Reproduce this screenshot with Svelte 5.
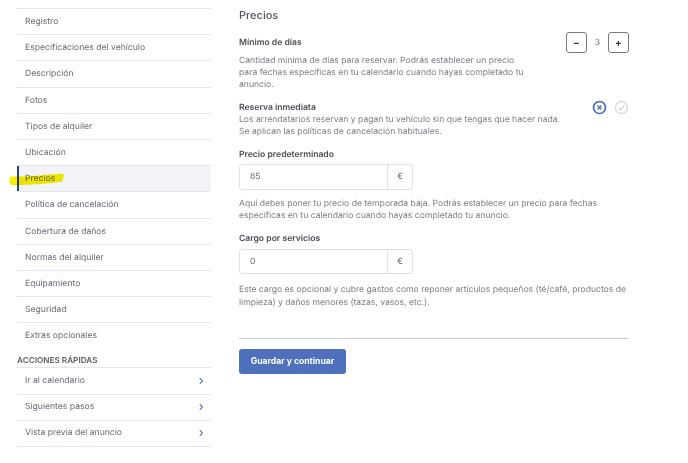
<script>
  const steps = ['Registro','Especificaciones del vehículo','Descripción','Fotos','Tipos de alquiler','Ubicación','Precios','Política de cancelación','Cobertura de daños','Normas del alquiler','Equipamiento','Seguridad','Extras opcionales'];
  const quick = ['Ir al calendario','Siguientes pasos','Vista previa del anuncio'];
</script>

<div class="page">
  <aside class="side">
    <ul class="nav">
      {#each steps as s}
        <li class:active={s === 'Precios'} class:last={s === 'Extras opcionales'}>
          {s}
          {#if s === 'Precios'}
            <svg class="marker" width="56" height="13" viewBox="0 0 56 13"><path d="M1 4 C3 3 14 4 24 3 C36 2 46 1 53 0.5 C55 0.5 55 3 54 6 C54 8 53 9 50 9 C38 11 20 12 3 12 C0 12 0 6 1 4 Z" fill="#f6f000"/></svg>
          {/if}
        </li>
      {/each}
    </ul>
    <h3>ACCIONES RÁPIDAS</h3>
    <ul class="nav quick">
      {#each quick as q}
        <li>
          {q}
          <svg width="6" height="8" viewBox="0 0 6 8"><path d="M1.8 1.2 L4.4 4 L1.8 6.8" fill="none" stroke="#5f7cc2" stroke-width="1.2"/></svg>
        </li>
      {/each}
    </ul>
  </aside>

  <main class="main">
    <h1>Precios</h1>

    <section class="split first">
      <div class="grow">
        <h2>Mínimo de días</h2>
        <p>Cantidad mínima de días para reservar. Podrás establecer un precio<br />para fechas específicas en tu calendario cuando hayas completado tu<br />anuncio.</p>
      </div>
      <div class="stepper">
        <button>−</button>
        <span>3</span>
        <button>+</button>
      </div>
    </section>

    <section class="split second">
      <div class="grow">
        <h2 class="tight">Reserva inmediata</h2>
        <p>Los arrendatarios reservan y pagan tu vehículo sin que tengas que hacer nada.<br />Se aplican las políticas de cancelación habituales.</p>
      </div>
      <div class="toggles">
        <svg width="15" height="15" viewBox="0 0 15 15"><circle cx="7.5" cy="7.5" r="6" fill="none" stroke="#4368b8" stroke-width="1.7"/><path d="M5.5 5.5 L9.5 9.5 M9.5 5.5 L5.5 9.5" stroke="#4368b8" stroke-width="1.3"/></svg>
        <svg width="15" height="15" viewBox="0 0 15 15"><circle cx="7.5" cy="7.5" r="6" fill="none" stroke="#d5dbe4" stroke-width="1.3"/><path d="M4.6 7.8 L6.7 9.8 L10.6 5.4" fill="none" stroke="#c9ced6" stroke-width="1.2"/></svg>
      </div>
    </section>

    <section class="field">
      <h2>Precio predeterminado</h2>
      <div class="input"><span class="val">85</span><span class="unit">€</span></div>
      <p>Aquí debes poner tu precio de temporada baja. Podrás establecer un precio para fechas<br />específicas en tu calendario cuando hayas completado tu anuncio.</p>
    </section>

    <section class="field service">
      <h2>Cargo por servicios</h2>
      <div class="input"><span class="val">0</span><span class="unit">€</span></div>
      <p>Este cargo es opcional y cubre gastos como reponer artículos pequeños (té/café, productos de<br />limpieza) y daños menores (tazas, vasos, etc.).</p>
    </section>

    <hr />
    <button class="save">Guardar y continuar</button>
  </main>
</div>

<style>
  :global(body) { margin: 0; background: #fff; }
  .page {
    display: flex;
    width: 688px;
    height: 463px;
    overflow: hidden;
    box-sizing: border-box;
    padding: 8px 0 0 17px;
    font-family: Inter, "Open Sans", sans-serif;
    font-size: 8.6px;
    color: #6e6e78;
    text-rendering: geometricPrecision;
  }
  .side { width: 194px; flex: none; }
  .nav { list-style: none; margin: 0; padding: 0; border-top: 1px solid #e3e6ed; }
  .nav li {
    position: relative;
    height: 25.2px;
    line-height: 26px;
    padding-left: 8px;
    border-bottom: 1px solid #e3e6ed;
    color: #6b6a75;
  }
  .nav li.last { border-bottom: none; }
  .nav li.active { background: #f2f4f8; box-shadow: inset 2px 0 0 #2b3f8f; }
  .marker { position: absolute; left: -8px; top: 7px; mix-blend-mode: multiply; }
  h3 {
    margin: 5px 0 0;
    height: 14px;
    line-height: 14px;
    font-size: 8.2px;
    font-weight: 600;
    color: #5c5c66;
  }
  .quick li { display: flex; align-items: center; justify-content: space-between; padding-right: 7px; line-height: 22px; }
  .main { width: 390px; margin-left: 28px; }
  h1 { margin: 0; padding-top: 1px; font-size: 11px; line-height: 13px; font-weight: 500; color: #55555f; }
  h2 { margin: 0 0 2px; font-size: 8.6px; line-height: 13px; font-weight: 600; color: #4d4d57; }
  .first h2 { margin-bottom: 5px; }
  h2.tight { margin-bottom: -1px; }
  .service h2 { margin-bottom: 3px; }
  p { margin: 0; line-height: 12.2px; color: #7d7d86; }
  .split { display: flex; justify-content: space-between; }
  .grow { flex: 1; }
  .first { margin-top: 15px; }
  .second { margin-top: 10px; }
  .stepper { display: flex; align-items: flex-start; gap: 7px; margin-top: -5px; }
  .stepper span { line-height: 23px; width: 7px; text-align: center; }
  .stepper button {
    width: 21px; height: 21px; padding: 0 0 2px;
    border: 1.4px solid #747a84; border-radius: 3px;
    background: #fff;
    font: 700 10px/1 Inter, sans-serif; color: #3c3c44;
  }
  .toggles { display: flex; gap: 7px; margin-top: -2px; }
  .field { margin-top: 11px; }
  .field p { margin-top: 8px; }
  .service p { margin-top: 10px; }
  .input {
    display: flex; width: 172px; height: 23.5px;
    border: 1px solid #dde2ea; border-radius: 3px;
    line-height: 25.5px; color: #62626b;
  }
  .val { flex: 1; padding-left: 10px; }
  .unit { width: 24px; border-left: 1px solid #dde2ea; text-align: center; }
  hr { margin: 29px 0 0; border: 0; border-top: 1px solid #c8cfdc; }
  .save {
    display: block;
    margin-top: 10px;
    width: 107px; height: 25px;
    padding: 0;
    border: 0; border-radius: 3px;
    background: #4f70bd; color: #fff;
    font: 700 8.6px Inter, sans-serif;
  }
</style>
